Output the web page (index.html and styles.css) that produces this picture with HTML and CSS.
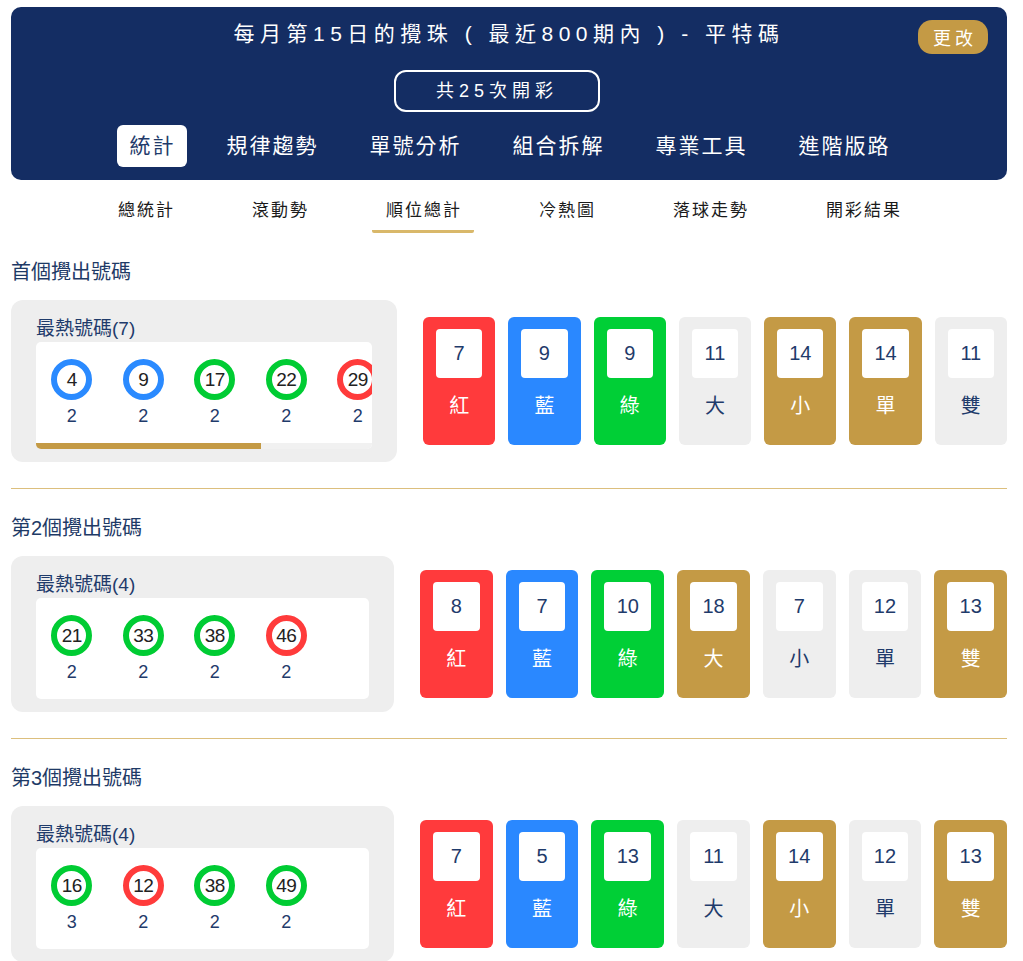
FILE: index.html
```html
<!DOCTYPE html>
<html lang="zh-Hant">
<head>
    <meta charset="UTF-8">
    <meta name="viewport" content="width=device-width, initial-scale=1.0">
    <title>順位總計 - 平特碼</title>
    <link rel="stylesheet" href="styles.css">
</head>
<body>
<div class="page">

    <!-- 頂部 -->
    <div class="header">
        <div class="header-title">每月第15日的攪珠 ( 最近800期內 ) - 平特碼</div>
        <button class="change-btn">更改</button>
        <div class="draw-count">共25次開彩</div>
        <div class="main-nav">
            <a class="main-tab active">統計</a>
            <a class="main-tab">規律趨勢</a>
            <a class="main-tab">單號分析</a>
            <a class="main-tab">組合拆解</a>
            <a class="main-tab">專業工具</a>
            <a class="main-tab">進階版路</a>
        </div>
    </div>

    <div class="sub-nav">
        <a class="sub-tab">總統計</a>
        <a class="sub-tab">滾動勢</a>
        <a class="sub-tab active">順位總計</a>
        <a class="sub-tab">冷熱圖</a>
        <a class="sub-tab">落球走勢</a>
        <a class="sub-tab">開彩結果</a>
    </div>

    <!-- 首個 -->
    <div class="section">
        <div class="section-title">首個攪出號碼</div>
        <div class="section-body">
            <div class="hot-card">
                <div class="hot-title">最熱號碼(7)</div>
                <div class="hot-box">
                    <div class="hot-list">
                        <div class="hot-item"><div class="ball blue">4</div><div class="hot-count">2</div></div>
                        <div class="hot-item"><div class="ball blue">9</div><div class="hot-count">2</div></div>
                        <div class="hot-item"><div class="ball green">17</div><div class="hot-count">2</div></div>
                        <div class="hot-item"><div class="ball green">22</div><div class="hot-count">2</div></div>
                        <div class="hot-item"><div class="ball red">29</div><div class="hot-count">2</div></div>
                        <div class="hot-item"><div class="ball red">35</div><div class="hot-count">2</div></div>
                        <div class="hot-item"><div class="ball blue">41</div><div class="hot-count">2</div></div>
                    </div>
                    <div class="scroll-track"><div class="scroll-thumb" style="width: 67%"></div></div>
                </div>
            </div>
            <div class="stat-boxes">
                <div class="stat-box red"><div class="stat-num">7</div><div class="stat-label">紅</div></div>
                <div class="stat-box blue"><div class="stat-num">9</div><div class="stat-label">藍</div></div>
                <div class="stat-box green"><div class="stat-num">9</div><div class="stat-label">綠</div></div>
                <div class="stat-box"><div class="stat-num">11</div><div class="stat-label">大</div></div>
                <div class="stat-box gold"><div class="stat-num">14</div><div class="stat-label">小</div></div>
                <div class="stat-box gold"><div class="stat-num">14</div><div class="stat-label">單</div></div>
                <div class="stat-box"><div class="stat-num">11</div><div class="stat-label">雙</div></div>
            </div>
        </div>
    </div>

    <!-- 第2個 -->
    <div class="section">
        <div class="section-title">第2個攪出號碼</div>
        <div class="section-body">
            <div class="hot-card narrow">
                <div class="hot-title">最熱號碼(4)</div>
                <div class="hot-box">
                    <div class="hot-list">
                        <div class="hot-item"><div class="ball green">21</div><div class="hot-count">2</div></div>
                        <div class="hot-item"><div class="ball green">33</div><div class="hot-count">2</div></div>
                        <div class="hot-item"><div class="ball green">38</div><div class="hot-count">2</div></div>
                        <div class="hot-item"><div class="ball red">46</div><div class="hot-count">2</div></div>
                    </div>
                </div>
            </div>
            <div class="stat-boxes">
                <div class="stat-box red"><div class="stat-num">8</div><div class="stat-label">紅</div></div>
                <div class="stat-box blue"><div class="stat-num">7</div><div class="stat-label">藍</div></div>
                <div class="stat-box green"><div class="stat-num">10</div><div class="stat-label">綠</div></div>
                <div class="stat-box gold"><div class="stat-num">18</div><div class="stat-label">大</div></div>
                <div class="stat-box"><div class="stat-num">7</div><div class="stat-label">小</div></div>
                <div class="stat-box"><div class="stat-num">12</div><div class="stat-label">單</div></div>
                <div class="stat-box gold"><div class="stat-num">13</div><div class="stat-label">雙</div></div>
            </div>
        </div>
    </div>

    <!-- 第3個 -->
    <div class="section">
        <div class="section-title">第3個攪出號碼</div>
        <div class="section-body">
            <div class="hot-card narrow">
                <div class="hot-title">最熱號碼(4)</div>
                <div class="hot-box">
                    <div class="hot-list">
                        <div class="hot-item"><div class="ball green">16</div><div class="hot-count">3</div></div>
                        <div class="hot-item"><div class="ball red">12</div><div class="hot-count">2</div></div>
                        <div class="hot-item"><div class="ball green">38</div><div class="hot-count">2</div></div>
                        <div class="hot-item"><div class="ball green">49</div><div class="hot-count">2</div></div>
                    </div>
                </div>
            </div>
            <div class="stat-boxes">
                <div class="stat-box red"><div class="stat-num">7</div><div class="stat-label">紅</div></div>
                <div class="stat-box blue"><div class="stat-num">5</div><div class="stat-label">藍</div></div>
                <div class="stat-box green"><div class="stat-num">13</div><div class="stat-label">綠</div></div>
                <div class="stat-box"><div class="stat-num">11</div><div class="stat-label">大</div></div>
                <div class="stat-box gold"><div class="stat-num">14</div><div class="stat-label">小</div></div>
                <div class="stat-box"><div class="stat-num">12</div><div class="stat-label">單</div></div>
                <div class="stat-box gold"><div class="stat-num">13</div><div class="stat-label">雙</div></div>
            </div>
        </div>
    </div>

</div>
</body>
</html>
```

FILE: styles.css
```css
body {
    margin: 0;
    font-family: "Liberation Sans", "Noto Sans CJK TC", sans-serif;
    background: #ffffff;
    color: #1f3b6b;
}
.page {
    padding: 7px 16px 40px 11px;
}
a {
    cursor: pointer;
}

/* 頂部 */
.header {
    position: relative;
    background: #142d63;
    border-radius: 10px;
    padding: 12px 0 13px;
    display: flex;
    flex-direction: column;
    align-items: center;
    color: #ffffff;
}
.header-title {
    font-size: 21px;
    line-height: 30px;
    letter-spacing: 5.5px;
    white-space: pre;
}
.change-btn {
    position: absolute;
    top: 13px;
    right: 19px;
    width: 70px;
    height: 34px;
    border: none;
    border-radius: 14px;
    background: #c49a45;
    color: #ffffff;
    font-family: inherit;
    font-size: 18px;
    letter-spacing: 4px;
    padding: 0 0 0 4px;
}
.draw-count {
    margin: 21px 24px 0 0;
    width: 206px;
    height: 42px;
    box-sizing: border-box;
    border: 2px solid #ffffff;
    border-radius: 12px;
    font-size: 18px;
    line-height: 38px;
    letter-spacing: 5px;
    text-align: center;
}
.main-nav {
    margin-top: 13px;
    display: flex;
    gap: 27px;
}
.main-tab {
    height: 42px;
    line-height: 42px;
    padding: 0 11px 0 13px;
    font-size: 21px;
    letter-spacing: 2px;
    border-radius: 6px;
}
.main-tab.active {
    background: #ffffff;
    color: #1f3b6b;
}

/* 子選單 */
.sub-nav {
    margin-top: 18px;
    display: flex;
    justify-content: center;
    gap: 51px;
}
.sub-tab {
    padding: 0 12px 6px 14px;
    line-height: 26px;
    font-size: 17px;
    letter-spacing: 2px;
    color: #1a1a1a;
    border-bottom: 3px solid transparent;
}
.sub-tab.active {
    border-bottom-color: #d9b86a;
    border-radius: 0 0 2px 2px;
}

/* 順位區塊 */
.section {
    padding: 25px 0 26px;
    border-bottom: 1px solid #dcbf7d;
}
.section-title {
    font-size: 20px;
    line-height: 28px;
    color: #1e3a66;
}
.section-body {
    margin-top: 14px;
    display: flex;
    align-items: center;
}
.hot-card {
    width: 386px;
    box-sizing: border-box;
    background: #eeeeee;
    border-radius: 12px;
    padding: 16px 25px 13px;
}
.hot-card.narrow {
    width: 383px;
}
.hot-title {
    font-size: 19px;
    line-height: 26px;
}
.hot-box {
    background: #ffffff;
    border-radius: 5px;
    overflow: hidden;
}
.hot-list {
    display: flex;
    overflow: hidden;
    padding: 17px 0 16px;
}
.scroll-track {
    height: 6px;
    background: #f1f1f1;
}
.scroll-thumb {
    height: 100%;
    background: #c49a45;
}
.hot-item {
    flex: 0 0 71.5px;
    display: flex;
    flex-direction: column;
    align-items: center;
}
.ball {
    width: 41px;
    height: 41px;
    box-sizing: border-box;
    border: 6px solid #999;
    border-radius: 50%;
    background: #ffffff;
    color: #222222;
    font-size: 19px;
    line-height: 29px;
    text-align: center;
    letter-spacing: -0.5px;
}
.ball.red { border-color: #ff3b3b; }
.ball.blue { border-color: #2a8aff; }
.ball.green { border-color: #00cc33; }
.hot-count {
    margin-top: 5px;
    font-size: 18px;
    line-height: 22px;
}

.stat-boxes {
    flex: 1;
    margin-left: 26px;
    display: flex;
    gap: 13px;
}
.stat-box {
    flex: 1;
    height: 128px;
    box-sizing: border-box;
    padding: 12px 13px 0;
    border-radius: 6px;
    background: #eeeeee;
    display: flex;
    flex-direction: column;
    align-items: center;
}
.stat-num {
    width: 100%;
    height: 49px;
    background: #ffffff;
    border-radius: 4px;
    font-size: 20px;
    line-height: 49px;
    text-align: center;
    color: #1f3b6b;
}
.stat-label {
    margin-top: 16px;
    font-size: 20px;
    line-height: 24px;
    color: #1f3b6b;
}
.stat-box.red { background: #ff3a3c; }
.stat-box.blue { background: #2a88ff; }
.stat-box.green { background: #00cf36; }
.stat-box.gold { background: #c49a45; }
.stat-box.red .stat-label,
.stat-box.blue .stat-label,
.stat-box.green .stat-label,
.stat-box.gold .stat-label {
    color: #ffffff;
}
```
